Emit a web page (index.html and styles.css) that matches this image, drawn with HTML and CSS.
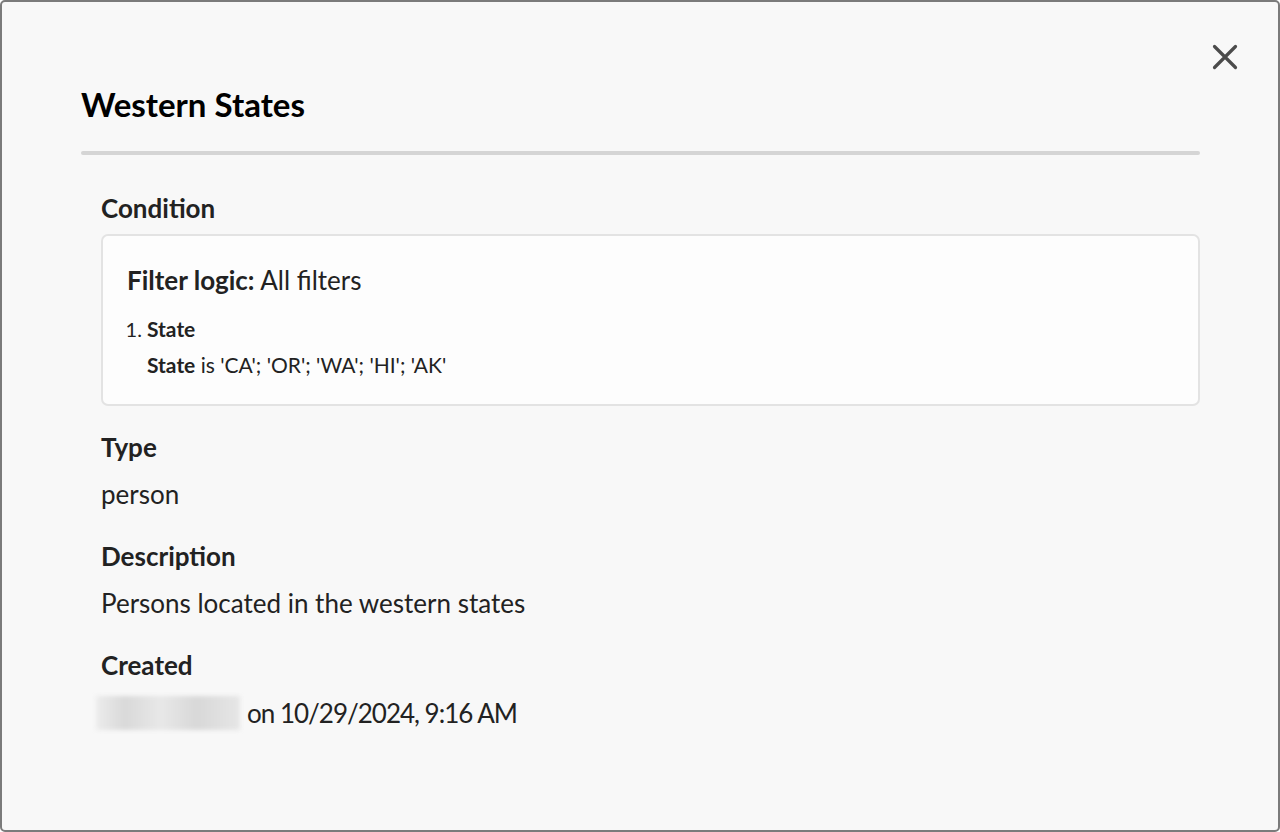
FILE: index.html
```html
<!DOCTYPE html>
<html lang="en">
<head>
<meta charset="utf-8">
<title>Western States</title>
<link rel="stylesheet" href="styles.css">
</head>
<body>
<div class="dialog">
  <header class="dialog-header">
    <h1 class="title">Western States</h1>
    <button class="close" aria-label="Close">
      <svg width="26" height="26" viewBox="0 0 26 26"><path d="M2.5 2.5 L23.5 23.5 M23.5 2.5 L2.5 23.5" stroke="#4b4b4b" stroke-width="3.2" stroke-linecap="round" fill="none"/></svg>
    </button>
  </header>
  <div class="divider"></div>
  <div class="content">
    <section class="field field-condition">
      <h2 class="label">Condition</h2>
      <div class="condition-box">
        <p class="logic"><b>Filter logic:</b> All filters</p>
        <ol class="filters">
          <li>
            <div class="filter-name">State</div>
            <div class="filter-rule"><b>State</b> is 'CA'; 'OR'; 'WA'; 'HI'; 'AK'</div>
          </li>
        </ol>
      </div>
    </section>
    <section class="field">
      <h2 class="label">Type</h2>
      <p class="value">person</p>
    </section>
    <section class="field">
      <h2 class="label">Description</h2>
      <p class="value">Persons located in the western states</p>
    </section>
    <section class="field">
      <h2 class="label">Created</h2>
      <p class="value created"><span class="blurred"></span><span class="date">on 10/29/2024, 9:16 AM</span></p>
    </section>
  </div>
</div>
</body>
</html>
```
FILE: styles.css
```css
* { box-sizing: border-box; }
html, body { margin: 0; padding: 0; }
body {
  font-family: Lato, "Noto Sans", sans-serif;
  color: #222;
  background: #fff;
}
.dialog {
  width: 1280px;
  height: 832px;
  border: 2px solid #7b7b7b;
  border-radius: 5px;
  background: #f8f8f8;
  padding: 0 78px 0 79px;
  display: flex;
  flex-direction: column;
}
.dialog-header {
  display: flex;
  justify-content: space-between;
  align-items: flex-start;
  height: 149px;
}
.title {
  margin: 82px 0 0 0;
  font-size: 33px;
  line-height: 40px;
  font-weight: 700;
  color: #000;
}
.close {
  margin: 29px -51px 0 0;
  width: 52px;
  height: 52px;
  border: 0;
  background: transparent;
  padding: 0;
  display: flex;
  align-items: center;
  justify-content: center;
}
.divider {
  height: 4px;
  background: #d5d5d5;
  border-radius: 2px;
}
.content {
  padding: 37px 0 0 20px;
  display: flex;
  flex-direction: column;
  gap: 30px;
}
.field { display: flex; flex-direction: column; }
.field-condition { margin-bottom: -5px; }
.label {
  margin: 0;
  font-size: 26px;
  line-height: 32px;
  font-weight: 700;
  color: #222;
}
.value {
  margin: 15px 0 0 0;
  font-size: 26px;
  line-height: 32px;
}
.condition-box {
  margin-top: 10px;
  background: #fdfdfd;
  border: 2px solid #e3e3e3;
  border-radius: 7px;
  height: 172px;
  padding: 28px 24px 0 24px;
}
.logic {
  margin: 0;
  font-size: 26px;
  line-height: 32px;
}
.filters {
  margin: 20px 0 0 0;
  padding: 0 0 0 20px;
  font-size: 21px;
  line-height: 26px;
}
.filters li::marker { font-weight: 400; font-size: 20px; }
.filter-name { font-weight: 700; }
.filter-rule { margin-top: 10px; }
.created { display: flex; align-items: center; }
.date { letter-spacing: -1px; }
.blurred {
  display: inline-block;
  width: 144px;
  height: 34px;
  margin-left: -5px;
  margin-right: 7px;
  background: linear-gradient(90deg, #ececec, #d9d9d9 20%, #e8e8e8 45%, #d8d8d8 70%, #e6e6e6);
  filter: blur(2px);
}
```
